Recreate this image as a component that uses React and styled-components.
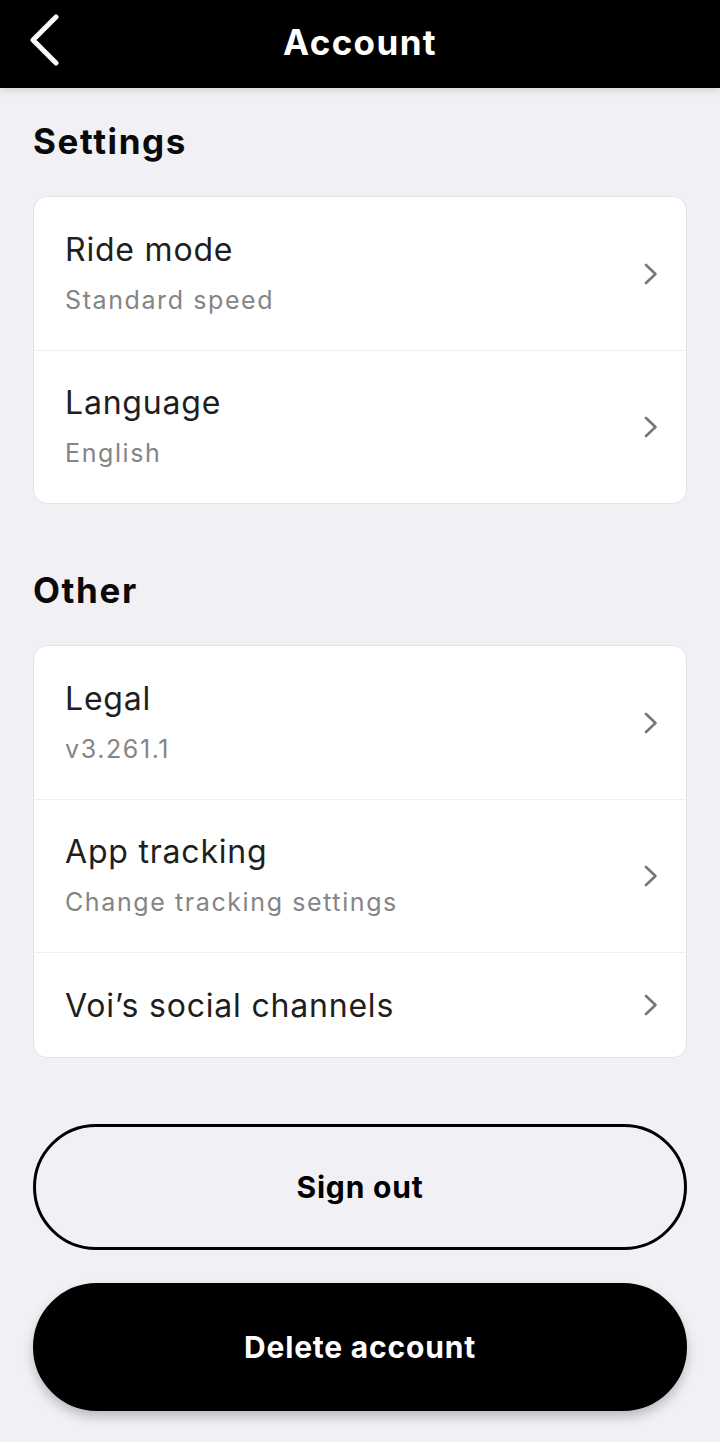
import React from "react";
import styled, { createGlobalStyle } from "styled-components";

const Global = createGlobalStyle`
  html, body { margin: 0; padding: 0; background: #f0f0f5; }
  body { font-family: Inter, "Noto Sans", sans-serif; -webkit-font-smoothing: antialiased; }
  * { box-sizing: border-box; }
`;

const Page = styled.div`
  width: 720px;
  min-height: 1442px;
  background: #f0f0f5;
  display: flex;
  flex-direction: column;
`;

const Header = styled.header`
  height: 88px;
  background: #000;
  display: flex;
  align-items: center;
  justify-content: center;
  position: relative;
  box-shadow: 0 2px 8px rgba(0, 0, 0, 0.12);
`;

const BackButton = styled.button`
  position: absolute;
  left: 22px;
  top: 12px;
  width: 44px;
  height: 56px;
  border: 0;
  padding: 0;
  background: transparent;
  display: flex;
  align-items: center;
  justify-content: center;
`;

const Title = styled.h1`
  margin: -4px 0 0;
  color: #fff;
  font-size: 35px;
  font-weight: 700;
  letter-spacing: 1.4px;
  line-height: 40px;
`;

const Content = styled.main`
  padding: 0 33px;
  display: flex;
  flex-direction: column;
`;

const SectionTitle = styled.h2`
  margin: ${(p) => p.$top}px 0 35px;
  font-size: 35px;
  font-weight: 700;
  line-height: 40px;
  color: #0a0a0a;
  letter-spacing: 1.6px;
`;

const Card = styled.div`
  background: #fff;
  border: 1px solid #e4e4e8;
  border-radius: 14px;
  overflow: hidden;
`;

const Row = styled.div`
  display: flex;
  align-items: center;
  height: ${(p) => (p.$single ? 105 : 153)}px;
  padding: 0 27px 0 31px;
  border-top: ${(p) => (p.$first ? "0" : "1px solid #efeff1")};
`;

const RowText = styled.div`
  flex: 1;
  display: flex;
  flex-direction: column;
  gap: 13px;
  margin-top: ${(p) => (p.$single ? 1 : -1)}px;
`;

const RowTitle = styled.div`
  font-size: 32px;
  line-height: 40px;
  color: #1e1e1e;
  font-weight: 400;
  letter-spacing: 0.8px;
`;

const RowSub = styled.div`
  font-size: 25px;
  line-height: 34px;
  color: #858585;
  letter-spacing: 1.6px;
`;

const Buttons = styled.div`
  display: flex;
  flex-direction: column;
  gap: 33px;
  margin-top: 66px;
`;

const PillButton = styled.button`
  height: ${(p) => (p.$dark ? 128 : 126)}px;
  border-radius: 64px;
  border: 3px solid #000;
  background: ${(p) => (p.$dark ? "#000" : "transparent")};
  color: ${(p) => (p.$dark ? "#fff" : "#000")};
  font-family: Inter, "Noto Sans", sans-serif;
  font-size: 30px;
  font-weight: 700;
  letter-spacing: 0.8px;
  box-shadow: ${(p) => (p.$dark ? "0 6px 12px rgba(0,0,0,0.22)" : "none")};
`;

const Chevron = () => (
  <svg width="16" height="24" viewBox="0 0 16 24">
    <path d="M3 3 L12.5 12 L3 21" fill="none" stroke="#777" strokeWidth="2.6" strokeLinecap="round" strokeLinejoin="round" />
  </svg>
);

const BackIcon = () => (
  <svg width="34" height="52" viewBox="0 0 34 52">
    <path d="M29 3 L6 26 L29 49" fill="none" stroke="#fff" strokeWidth="5" strokeLinecap="round" strokeLinejoin="round" />
  </svg>
);

const Item = ({ title, sub, first }) => (
  <Row $first={first} $single={!sub}>
    <RowText $single={!sub}>
      <RowTitle>{title}</RowTitle>
      {sub && <RowSub>{sub}</RowSub>}
    </RowText>
    <Chevron />
  </Row>
);

export default function App() {
  return (
    <Page>
      <Global />
      <Header>
        <BackButton aria-label="Back">
          <BackIcon />
        </BackButton>
        <Title>Account</Title>
      </Header>
      <Content>
        <SectionTitle $top={33}>Settings</SectionTitle>
        <Card>
          <Item first title="Ride mode" sub="Standard speed" />
          <Item title="Language" sub="English" />
        </Card>
        <SectionTitle $top={66}>Other</SectionTitle>
        <Card>
          <Item first title="Legal" sub="v3.261.1" />
          <Item title="App tracking" sub="Change tracking settings" />
          <Item title="Voi’s social channels" />
        </Card>
        <Buttons>
          <PillButton>Sign out</PillButton>
          <PillButton $dark>Delete account</PillButton>
        </Buttons>
      </Content>
    </Page>
  );
}
